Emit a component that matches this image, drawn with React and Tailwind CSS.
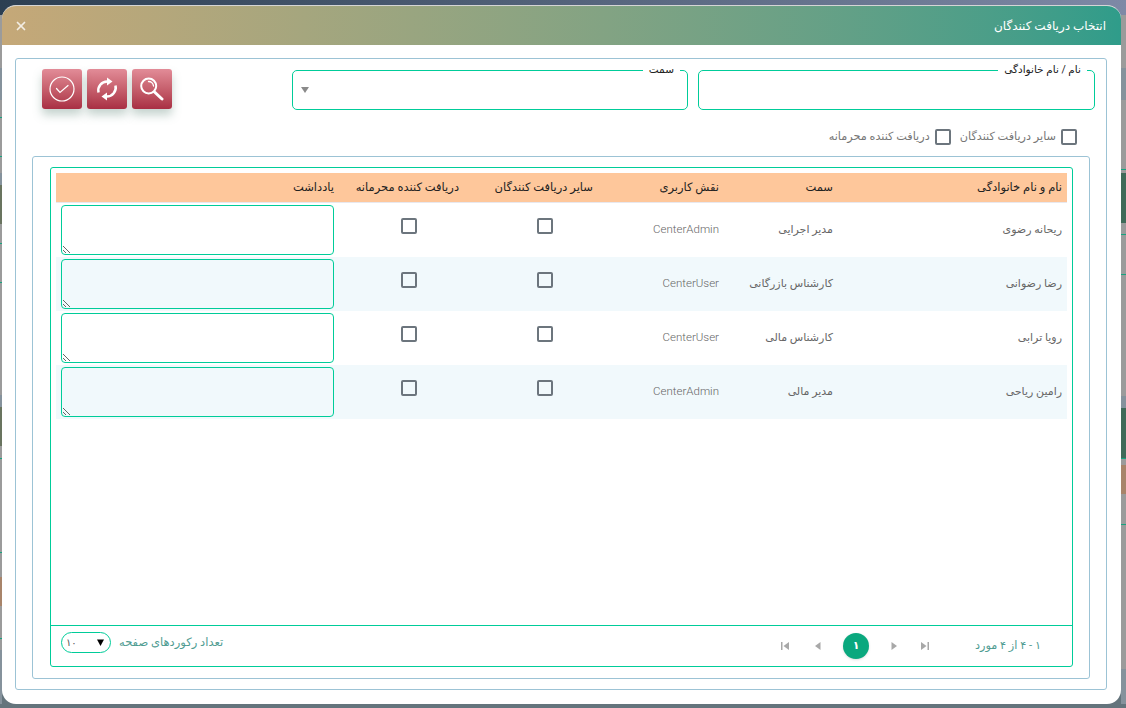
import React from 'react'
import { X } from 'lucide-react'

const rows = [
  { name: 'ریحانه رضوی', title: 'مدیر اجرایی', role: 'CenterAdmin' },
  { name: 'رضا رضوانی', title: 'کارشناس بازرگانی', role: 'CenterUser' },
  { name: 'رویا ترابی', title: 'کارشناس مالی', role: 'CenterUser' },
  { name: 'رامین ریاحی', title: 'مدیر مالی', role: 'CenterAdmin' },
]

const cols = 'grid grid-cols-[229px_114px_126px_134px_125px_1fr]'

const gray = 'bg-[#9b9b9b]'
const slate = 'bg-[#85929c]'
const green = 'bg-[#16a37f]'
const olive = 'bg-[#69745f]'
const teal = 'bg-[#3f6a58]'
const brown = 'bg-[#a8846a]'

// what little of the page behind shows past the dialog
const leftBands = [
  ['h-[53px]', gray], ['h-[32px]', slate], ['h-[17px]', gray], ['h-px', green], ['h-[38px]', gray], ['h-px', green],
  ['h-[16px]', gray], ['h-[12px]', slate], ['h-[39px]', olive], ['h-[19px]', gray], ['h-px', green], ['h-[38px]', gray], ['h-px', green],
  ['h-[112px]', gray], ['h-[12px]', slate], ['h-[39px]', olive], ['h-[12px]', gray], ['h-px', green], ['h-[93px]', gray], ['h-px', green],
  ['h-[24px]', gray], ['h-[29px]', brown], ['h-[32px]', gray], ['h-px', green], ['h-[11px]', gray], ['flex-1', slate],
]
const rightBands = [
  ['h-[53px]', gray], ['h-[32px]', slate], ['h-[69px]', gray], ['h-px', green], ['h-[3px]', gray], ['h-[50px]', teal],
  ['h-[11px]', gray], ['h-px', green], ['h-[39px]', gray], ['h-px', green], ['h-[121px]', gray], ['h-[12px]', slate],
  ['h-[50px]', teal], ['h-px', green], ['h-[6px]', gray], ['h-[29px]', brown], ['h-[30px]', gray], ['h-px', green],
  ['h-[144px]', gray], ['flex-1', slate],
]

function Box() {
  return <span className="block w-4 h-4 border-2 border-[#6c757d] rounded-[2px] bg-transparent"></span>
}

function Field({ label, width, children }) {
  return (
    <div className={`relative h-[40px] border border-[#00cc99] rounded-[5px] ${width}`}>
      <span className="absolute -top-[8px] right-[7px] px-[6px] bg-white text-[10.5px] leading-[14px] text-[#222]">{label}</span>
      {children}
    </div>
  )
}

function RedButton({ children }) {
  return (
    <button className="w-10 h-10 flex items-center justify-center rounded-[3px] bg-gradient-to-b from-[#e28c98] to-[#a92f44] text-white shadow-[0_6px_10px_rgba(90,130,115,0.35)]">
      {children}
    </button>
  )
}

function PageIcon({ d }) {
  return (
    <svg width="10" height="10" viewBox="0 0 10 10" className="fill-[#a8a8a8]">
      <path d={d} />
    </svg>
  )
}

function SideStrip({ bands, width }) {
  return (
    <div className={`relative z-10 flex flex-col pt-[10px] ${width}`}>
      {bands.map(([h, c], i) => <div key={i} className={`${h} ${c}`}></div>)}
    </div>
  )
}

export default function App() {
  return (
    <div className="relative h-[708px] w-[1126px] overflow-hidden flex pt-[5px] pb-[4px] bg-[#64747c] font-['Roboto','DejaVu_Sans',sans-serif]">
      <div className="absolute top-0 inset-x-0 h-[24px] bg-gradient-to-r from-[#2c3f52] to-[#7e89a6]"></div>
      <SideStrip bands={leftBands} width="w-[2px]" />
      <div dir="rtl" className="relative z-10 flex-1 flex flex-col bg-white rounded-[14px] overflow-hidden border-t border-[#d5d5d5]">
        {/* Header */}
        <div className="h-[39px] shrink-0 flex items-center justify-between pr-[15px] pl-[12px] bg-gradient-to-l from-[#2f9c8a] to-[#c5a878] text-white">
          <h2 className="text-[12px] font-normal">انتخاب دریافت کنندگان</h2>
          <X size={14} strokeWidth={3} className="opacity-80" />
        </div>

        <div className="flex-1 flex flex-col pt-[13px] pb-[14px] pr-[14px] pl-[13px] min-h-0">
          <div className="flex-1 flex flex-col border border-[#9cc3d5] rounded-[3px] min-h-0">
            {/* Filters */}
            <div className="flex items-start gap-[10px] pt-[11px] pr-[11px] pl-[26px]">
              <Field label="نام / نام خانوادگی" width="w-[397px]" />
              <Field label="سمت" width="w-[396px]">
                <svg width="8" height="6" viewBox="0 0 8 6" className="absolute left-[8px] top-[16px] fill-[#8a8a8a]"><path d="M0 0h8L4 6z" /></svg>
              </Field>
              <div className="mr-auto -mt-px flex gap-[5px]">
                <RedButton>
                  <svg width="24" height="24" viewBox="0 0 24 24" fill="none" stroke="white" strokeLinecap="round">
                    <circle cx="8.700" cy="9" r="7.500" strokeWidth="2" />
                    <path d="M8.500 4.500a5 5 0 0 1 5 4.500" strokeWidth="1.300" />
                    <path d="M14.500 15l7.500 7" strokeWidth="3" />
                  </svg>
                </RedButton>
                <RedButton>
                  <svg width="24" height="24" viewBox="0 0 24 24" fill="none" stroke="white" strokeWidth="2.500">
                    <path d="M3.500 15.500a9 9 0 0 1 9-11" />
                    <path d="M20.500 8.500a9 9 0 0 1-9 11" />
                    <path d="M12 0.500l5.500 4-5.500 4z" fill="white" stroke="none" />
                    <path d="M12 15.500l-5.500 4 5.500 4z" fill="white" stroke="none" />
                  </svg>
                </RedButton>
                <RedButton>
                  <svg width="26" height="26" viewBox="0 0 26 26" fill="none" stroke="white" strokeLinecap="round">
                    <circle cx="13" cy="13" r="12" strokeWidth="1.200" />
                    <path d="M7.500 12.500l3.500 4 8-7" strokeWidth="1.200" />
                  </svg>
                </RedButton>
              </div>
            </div>
            <div className="flex items-center mt-[19px] pr-[29px] text-[11.25px] text-[#777]">
              <Box />
              <span className="mr-[5px] ml-[9px]">سایر دریافت کنندگان</span>
              <Box />
              <span className="mr-[5px]">دریافت کننده محرمانه</span>
            </div>

            {/* Grid */}
            <div className="flex-1 flex flex-col mt-[10px] mx-[16px] mb-[10px] pt-[10px] pb-[11px] pr-[16px] pl-[17px] border border-[#9cc3d5] rounded-[3px] min-h-0">
              <div className="flex-1 flex flex-col border border-[#00cc99] rounded-[3px] min-h-0">
                <div className="flex-1 pt-[5px] px-[5px] min-h-0">
                  <div className={`${cols} h-[30px] items-center bg-[#fec79b] border-b border-[#e8e8ee] text-[11.5px] text-[#222]`}>
                    {['نام و نام خانوادگی', 'سمت', 'نقش کاربری', 'سایر دریافت کنندگان', 'دریافت کننده محرمانه', 'یادداشت'].map(h => (
                      <div key={h} className="pr-[5px]">{h}</div>
                    ))}
                  </div>
                  {rows.map((r, i) => (
                    <div key={r.name} className={`${cols} h-[54px] text-[11px] text-[#666] ${i % 2 ? 'bg-[#f1f9fc]' : 'bg-white'}`}>
                      <div className="pr-[5px] pt-[19px]">{r.name}</div>
                      <div className="pr-[5px] pt-[19px]">{r.title}</div>
                      <div className="pr-[5px] pt-[18px] text-[11.5px] font-light text-[#666]">{r.role}</div>
                      <div className="pr-[45px] pt-[15px]"><Box /></div>
                      <div className="pr-[47px] pt-[15px]"><Box /></div>
                      <div className="pr-[5px] pl-[5px] pt-[2px]">
                        <textarea className="block w-full h-[50px] border border-[#00cc99] rounded-[4px] bg-transparent outline-none"></textarea>
                      </div>
                    </div>
                  ))}
                </div>
                {/* Footer */}
                <div className="h-[41px] shrink-0 flex items-center border-t border-[#00cc99] text-[11.25px] text-[#4f9c92] pr-[31px] pl-[10px]">
                  <span className="w-[66px] whitespace-nowrap">۱ - ۴ از ۴ مورد</span>
                  <div className="flex items-center mr-[45px]">
                    <PageIcon d="M9 1v8H7.500V1zM1 1v8l5.500-4z" />
                    <span className="mr-[21px]"><PageIcon d="M2.500 1v8L8 5z" /></span>
                    <span className="mr-[20px] w-[26px] h-[26px] rounded-full bg-[#0aa87e] text-white flex items-center justify-center text-[11px] font-bold shadow-sm">۱</span>
                    <span className="mr-[20px]"><PageIcon d="M7.500 1v8L2 5z" /></span>
                    <span className="mr-[23px]"><PageIcon d="M1 1v8h1.500V1zM9 1v8L3.500 5z" /></span>
                  </div>
                  <div className="mr-auto mb-[7px] flex items-center gap-[8px]">
                    <span className="text-[11.5px]">تعداد رکوردهای صفحه</span>
                    <div dir="ltr" className="flex items-center justify-between w-[50px] h-[21px] border border-[#00cc99] rounded-full bg-white pl-[4px] pr-[6px] text-[10px] text-[#555]">
                      <span>۱۰</span>
                      <svg width="7" height="7" viewBox="0 0 7 7" className="fill-black"><path d="M0 0.500h7L3.500 7z" /></svg>
                    </div>
                  </div>
                </div>
              </div>
            </div>
          </div>
        </div>
      </div>
      <SideStrip bands={rightBands} width="w-[5px]" />
    </div>
  )
}
